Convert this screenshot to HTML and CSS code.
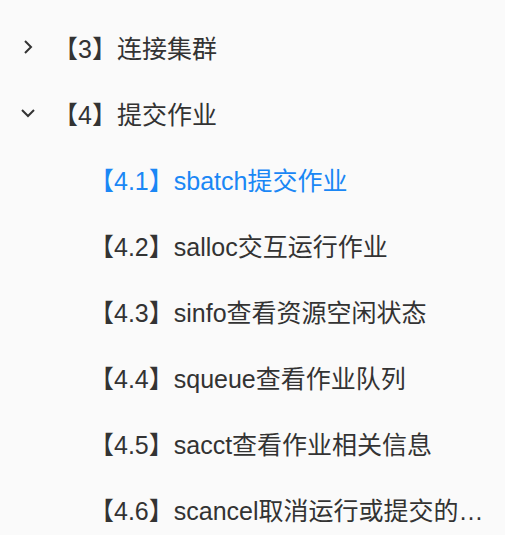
FILE: index.html
```html
<!DOCTYPE html>
<html lang="zh">
<head>
<meta charset="utf-8">
<link rel="stylesheet" href="styles.css">
</head>
<body>
<ul class="tree">
  <li class="node">
    <div class="row">
      <span class="toggle"><svg width="16" height="16" viewBox="0 0 16 16"><path d="M5 2 L11 8 L5 14" fill="none" stroke="#333" stroke-width="2"/></svg></span>
      <span class="label">【3】连接集群</span>
    </div>
  </li>
  <li class="node">
    <div class="row">
      <span class="toggle"><svg width="16" height="16" viewBox="0 0 16 16"><path d="M2 5 L8 11 L14 5" fill="none" stroke="#333" stroke-width="2"/></svg></span>
      <span class="label">【4】提交作业</span>
    </div>
    <ul class="children">
      <li class="row sub active"><span class="label">【4.1】sbatch提交作业</span></li>
      <li class="row sub"><span class="label">【4.2】salloc交互运行作业</span></li>
      <li class="row sub"><span class="label">【4.3】sinfo查看资源空闲状态</span></li>
      <li class="row sub"><span class="label">【4.4】squeue查看作业队列</span></li>
      <li class="row sub"><span class="label">【4.5】sacct查看作业相关信息</span></li>
      <li class="row sub"><span class="label">【4.6】scancel取消运行或提交的作业</span></li>
    </ul>
  </li>
</ul>
</body>
</html>
```
FILE: styles.css
```css
html, body {
  margin: 0;
  padding: 0;
  background: #fafafa;
}
body {
  font-family: "Liberation Sans", "Noto Sans CJK SC", sans-serif;
  font-size: 25px;
  color: #333;
}
.tree, .children {
  list-style: none;
  margin: 0;
  padding: 0;
}
.tree {
  padding-top: 14px;
}
.row {
  display: flex;
  align-items: center;
  height: 66px;
  white-space: nowrap;
}
.toggle {
  width: 53px;
  display: flex;
  padding-left: 20px;
  box-sizing: border-box;
}
.toggle svg {
  display: block;
}
.sub {
  padding-left: 89px;
  padding-right: 17px;
}
.sub .label {
  overflow: hidden;
  text-overflow: ellipsis;
}
.active {
  color: #1a87f5;
}
```
